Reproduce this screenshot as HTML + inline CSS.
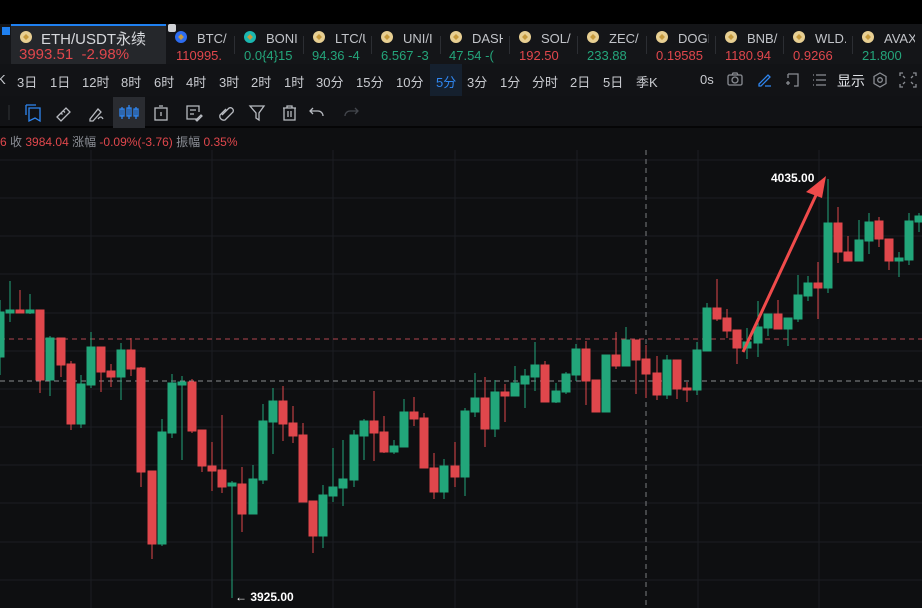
<!DOCTYPE html>
<html><head><meta charset="utf-8"><style>
*{margin:0;padding:0;box-sizing:border-box}
body{width:922px;height:608px;overflow:hidden;background:#0e0f11;font-family:"Liberation Sans","Noto Sans CJK SC",sans-serif;position:relative;color:#c9cbd0}
.a{position:absolute;white-space:nowrap}
#top{position:absolute;left:0;top:0;width:922px;height:24px;background:#000}
#tick{position:absolute;left:0;top:24px;width:922px;height:40px;background:#141518}
#tab{position:absolute;left:11px;top:24px;width:155px;height:40px;background:#25272b;border-top:2px solid #1f80f0}
.coin{position:absolute;width:12px;height:12px;border-radius:50%;background:#e8cf92}
.coin:after{content:"";position:absolute;left:3px;top:3px;width:6px;height:6px;background:#c69a3d;transform:rotate(45deg) scale(.7)}
.nm{font-size:13px;color:#c2c4c9;top:31px;width:31px;overflow:hidden}
.pr{font-size:13px;top:48px;width:58px;overflow:hidden}
.g{color:#24a57b}.r{color:#e0474c}
.sep{position:absolute;top:36px;width:1px;height:18px;background:#2c2e33}
#tf{position:absolute;left:0;top:64px;width:922px;height:32px;background:#121316}
.tf{font-size:13px;color:#c9cbd0;top:72px}
#tb{position:absolute;left:0;top:96px;width:922px;height:32px;background:#111215;border-bottom:2px solid #050506}
#info{font-size:12px;top:133px;color:#8b8e95}
</style></head><body>
<div id="top"></div>
<div id="tick"></div>
<div id="tab"></div>
<div class="a" style="left:2px;top:27px;width:8px;height:8px;background:#1f80f0"></div>
<div class="a" style="left:168px;top:24px;width:8px;height:8px;background:#cfd1d5;border-radius:2px"></div>
<div class="coin" style="left:20px;top:31px"></div>
<div class="a" style="left:41px;top:28px;font-size:15px;color:#d6d8dc">ETH/USDT永续</div>
<div class="a r" style="left:19px;top:46px;font-size:15px">3993.51 &nbsp;-2.98%</div>
<div class="coin" style="left:175px;top:31px;background:#2d6cf0"></div>
<div class="a nm" style="left:197px">BTC/</div><div class="a pr r" style="left:176px;width:50px">110995.</div>
<div class="sep" style="left:234px"></div>
<div class="coin" style="left:244px;top:31px;background:#1bb7b0"></div>
<div class="a nm" style="left:266px">BONI</div><div class="a pr g" style="left:244px;width:52px">0.0{4}15</div>
<div class="sep" style="left:303px"></div>
<div class="coin" style="left:313px;top:31px"></div>
<div class="a nm" style="left:335px">LTC/U</div><div class="a pr g" style="left:312px;width:52px">94.36 -4</div>
<div class="sep" style="left:371px"></div>
<div class="coin" style="left:381px;top:31px"></div>
<div class="a nm" style="left:403px">UNI/I</div><div class="a pr g" style="left:381px;width:52px">6.567 -3</div>
<div class="sep" style="left:440px"></div>
<div class="coin" style="left:450px;top:31px"></div>
<div class="a nm" style="left:472px">DASH</div><div class="a pr g" style="left:449px;width:52px">47.54 -(</div>
<div class="sep" style="left:509px"></div>
<div class="coin" style="left:519px;top:31px"></div>
<div class="a nm" style="left:541px">SOL/</div><div class="a pr r" style="left:519px">192.50</div>
<div class="sep" style="left:577px"></div>
<div class="coin" style="left:587px;top:31px"></div>
<div class="a nm" style="left:609px">ZEC/</div><div class="a pr g" style="left:587px">233.88</div>
<div class="sep" style="left:646px"></div>
<div class="coin" style="left:656px;top:31px"></div>
<div class="a nm" style="left:678px">DOGI</div><div class="a pr r" style="left:656px">0.19585</div>
<div class="sep" style="left:715px"></div>
<div class="coin" style="left:725px;top:31px"></div>
<div class="a nm" style="left:747px">BNB/</div><div class="a pr r" style="left:725px">1180.94</div>
<div class="sep" style="left:783px"></div>
<div class="coin" style="left:793px;top:31px"></div>
<div class="a nm" style="left:815px">WLD.</div><div class="a pr r" style="left:793px">0.9266</div>
<div class="sep" style="left:852px"></div>
<div class="coin" style="left:862px;top:31px"></div>
<div class="a nm" style="left:884px">AVAX</div><div class="a pr g" style="left:862px">21.800</div>

<div id="tf"></div>
<div class="a" style="left:430px;top:64px;width:32px;height:32px;background:#15202e"></div>
<div class="a tf" style="left:-3px">K</div>
<div class="a tf" style="left:17px">3日</div><div class="a tf" style="left:50px">1日</div>
<div class="a tf" style="left:82px">12时</div><div class="a tf" style="left:121px">8时</div>
<div class="a tf" style="left:154px">6时</div><div class="a tf" style="left:186px">4时</div>
<div class="a tf" style="left:219px">3时</div><div class="a tf" style="left:251px">2时</div>
<div class="a tf" style="left:284px">1时</div><div class="a tf" style="left:316px">30分</div>
<div class="a tf" style="left:356px">15分</div><div class="a tf" style="left:396px">10分</div>
<div class="a tf" style="left:436px;color:#2f86f0">5分</div><div class="a tf" style="left:467px">3分</div>
<div class="a tf" style="left:500px">1分</div><div class="a tf" style="left:532px">分时</div>
<div class="a tf" style="left:570px">2日</div><div class="a tf" style="left:603px">5日</div>
<div class="a tf" style="left:636px">季K</div>
<div class="a tf" style="left:700px">0s</div>
<div class="a tf" style="left:837px;font-size:14px;color:#e0e2e6;top:71px">显示</div>
<svg class="a" style="left:0;top:64px" width="922" height="32" fill="none" stroke-width="1.3">
<g stroke="#8a8d93"><rect x="728" y="11" width="14" height="10" rx="1.5"/><circle cx="735" cy="16" r="3"/><path d="M732 11l1-2h4l1 2"/></g>
<g stroke="#2f86f0"><path d="M759 20l9-9 2 2-9 9h-2z M765 22h6"/></g>
<g stroke="#8a8d93"><path d="M788 10h10v12h-4 M788 10v4 M786 19h4 M788 17v4"/><path d="M816 11h10 M816 16h10 M816 21h10 M813 11h1 M813 16h1 M813 21h1"/>
<path d="M880 9l6 3.5v7l-6 3.5-6-3.5v-7z"/><circle cx="880" cy="16" r="2.3"/>
<path d="M903 9h-3v3 M913 9h3v3 M903 23h-3v-3 M913 23h3v-3 M903 12l2 2 M913 12l-2 2 M903 20l2-2 M913 20l-2-2"/></g>
</svg>

<div id="tb"></div>
<div class="a" style="left:113px;top:97px;width:32px;height:31px;background:#2a2c31"></div>
<svg class="a" style="left:0;top:96px" width="400" height="32" fill="none" stroke-width="1.3">
<path d="M9 9v15" stroke="#2b2d31"/>
<g stroke="#2f86f0"><path d="M26 9h10 M26 9v10 M29 12h11v13l-5-3-6 3z"/>
<path d="M122 11v12 M136 11v12 M129 9v14"/><rect x="120" y="13" width="4" height="7"/><rect x="127" y="12" width="4" height="8"/><rect x="134" y="13" width="4" height="7"/></g>
<g stroke="#b8bbc1"><path d="M57 21l9-9 4 4-9 9z M61 17l1.5 1.5 M63.5 15l1.5 1.5"/>
<path d="M90 23l8-10 3 3-8 9h-3z M98 23q3-4 5 0"/>
<rect x="155" y="12" width="12" height="12"/><path d="M159 10h4 M161 16v4"/>
<path d="M198 23h-11v-13h12v6 M190 14h6 M190 18h4 M196 24l5-5 1 1-5 5z"/>
<path d="M222 19l7-7a3 3 0 0 1 4 4l-8 8a4 4 0 0 1-5-5l6-6"/>
<path d="M250 10h14l-5 7v7l-3-2v-5z"/>
<path d="M283 12h13 M287 12v-2h5v2 M284 12v12h11v-12 M288 15v6 M291 15v6"/>
<path d="M313 12l-3 3 3 3 M310 15h8a5 5 0 0 1 5 5"/></g>
<path d="M355 12l3 3-3 3 M358 15h-8a5 5 0 0 0-5 5" stroke="#44474d"/>
</svg>
<div class="a" id="info"><span class="r">6</span> 收 <span class="r">3984.04</span> 涨幅 <span class="r">-0.09%(-3.76)</span> 振幅 <span class="r">0.35%</span></div>

<svg class="a" style="left:0;top:150px" width="922" height="458">
<g transform="translate(0,-150)">
<g stroke="#1c1e22" stroke-width="1">
<path d="M0 160H922M0 198H922M0 236H922M0 274H922M0 313H922M0 351H922M0 389H922M0 427H922M0 465H922M0 503H922M0 542H922M0 580H922"/>
<path d="M91 150V608M212 150V608M333 150V608M455 150V608M577 150V608M698 150V608M819 150V608"/>
</g>
<path d="M0 339H922" stroke="#b0464f" stroke-dasharray="5 4" stroke-width="1"/>
<path d="M0 381H922" stroke="#8a8c90" stroke-dasharray="5 4" stroke-width="1"/>
<path d="M646 150V608" stroke="#7a7c80" stroke-dasharray="5 4" stroke-width="1"/>
<g fill="#22a67a" stroke="#22a67a">
<path d="M0 300V375M10 281V322M30 294V314M50 336V396M81 375V428M91 332V388M121 343V400M162 419V546M172 374V438M182 376V460M232 481V598M253 465V514M263 404V484M273 388V454M323 485V548M333 448V502M343 440V506M354 430V487M364 419V460M394 440V454M404 399V447M444 459V499M465 408V496M475 373V417M495 380V437M515 366V396M525 369V408M535 342V391M556 383V403M566 372V394M576 344V381M606 355V412M626 327V366M667 355V399M697 342V395M707 303V351M747 328V359M758 301V357M768 314V336M788 318V346M798 275V322M808 276V301M828 179V293M859 220V261M869 213V254M899 252V277M909 213V265M919 213V232"/>
<rect x="-4" y="312" width="8" height="45"/><rect x="6" y="310" width="8" height="3"/><rect x="26" y="310" width="8" height="3"/><rect x="46" y="338" width="8" height="42"/><rect x="77" y="384" width="8" height="40"/><rect x="87" y="347" width="8" height="38"/><rect x="117" y="350" width="8" height="27"/><rect x="158" y="432" width="8" height="112"/><rect x="168" y="383" width="8" height="50"/><rect x="178" y="382" width="8" height="3"/><rect x="228" y="483" width="8" height="3"/><rect x="249" y="479" width="8" height="35"/><rect x="259" y="421" width="8" height="59"/><rect x="269" y="401" width="8" height="21"/><rect x="319" y="495" width="8" height="41"/><rect x="329" y="487" width="8" height="9"/><rect x="339" y="479" width="8" height="9"/><rect x="350" y="435" width="8" height="45"/><rect x="360" y="421" width="8" height="15"/><rect x="390" y="446" width="8" height="6"/><rect x="400" y="412" width="8" height="35"/><rect x="440" y="466" width="8" height="26"/><rect x="461" y="411" width="8" height="66"/><rect x="471" y="398" width="8" height="14"/><rect x="491" y="392" width="8" height="37"/><rect x="511" y="383" width="8" height="13"/><rect x="521" y="376" width="8" height="8"/><rect x="531" y="365" width="8" height="12"/><rect x="552" y="391" width="8" height="11"/><rect x="562" y="374" width="8" height="18"/><rect x="572" y="349" width="8" height="26"/><rect x="602" y="355" width="8" height="57"/><rect x="622" y="340" width="8" height="26"/><rect x="663" y="360" width="8" height="35"/><rect x="693" y="350" width="8" height="40"/><rect x="703" y="308" width="8" height="43"/><rect x="743" y="342" width="8" height="6"/><rect x="754" y="327" width="8" height="16"/><rect x="764" y="314" width="8" height="14"/><rect x="784" y="318" width="8" height="11"/><rect x="794" y="295" width="8" height="24"/><rect x="804" y="283" width="8" height="13"/><rect x="824" y="223" width="8" height="65"/><rect x="855" y="240" width="8" height="21"/><rect x="865" y="222" width="8" height="19"/><rect x="895" y="258" width="8" height="3"/><rect x="905" y="221" width="8" height="39"/><rect x="915" y="216" width="8" height="6"/>
</g>
<g fill="#e0474c" stroke="#e0474c">
<path d="M20 290V313M40 310V393M61 338V377M71 361V430M101 347V392M111 364V387M131 338V376M141 367V487M152 471V559M192 379V433M202 430V472M212 442V491M222 415V493M242 467V532M283 386V441M293 406V443M303 423V502M313 501V553M374 391V461M384 416V453M414 397V426M424 413V468M434 453V499M455 442V487M485 377V447M505 384V422M545 361V402M586 341V405M596 380V412M616 332V369M636 340V394M646 345V398M657 356V400M677 360V399M687 382V402M717 279V321M727 309V338M737 330V364M778 300V329M818 262V319M838 207V263M848 236V261M879 217V247M889 239V270"/>
<rect x="16" y="310" width="8" height="3"/><rect x="36" y="310" width="8" height="70"/><rect x="57" y="338" width="8" height="27"/><rect x="67" y="364" width="8" height="60"/><rect x="97" y="347" width="8" height="25"/><rect x="107" y="371" width="8" height="6"/><rect x="127" y="350" width="8" height="19"/><rect x="137" y="368" width="8" height="104"/><rect x="148" y="471" width="8" height="73"/><rect x="188" y="382" width="8" height="49"/><rect x="198" y="430" width="8" height="36"/><rect x="208" y="466" width="8" height="5"/><rect x="218" y="470" width="8" height="17"/><rect x="238" y="484" width="8" height="30"/><rect x="279" y="401" width="8" height="23"/><rect x="289" y="423" width="8" height="13"/><rect x="299" y="435" width="8" height="67"/><rect x="309" y="501" width="8" height="35"/><rect x="370" y="421" width="8" height="12"/><rect x="380" y="432" width="8" height="20"/><rect x="410" y="412" width="8" height="7"/><rect x="420" y="418" width="8" height="50"/><rect x="430" y="468" width="8" height="24"/><rect x="451" y="466" width="8" height="11"/><rect x="481" y="398" width="8" height="31"/><rect x="501" y="392" width="8" height="4"/><rect x="541" y="365" width="8" height="37"/><rect x="582" y="349" width="8" height="32"/><rect x="592" y="380" width="8" height="32"/><rect x="612" y="355" width="8" height="11"/><rect x="632" y="340" width="8" height="20"/><rect x="642" y="359" width="8" height="15"/><rect x="653" y="373" width="8" height="22"/><rect x="673" y="360" width="8" height="29"/><rect x="683" y="388" width="8" height="2"/><rect x="713" y="308" width="8" height="11"/><rect x="723" y="318" width="8" height="13"/><rect x="733" y="330" width="8" height="18"/><rect x="774" y="314" width="8" height="15"/><rect x="814" y="283" width="8" height="5"/><rect x="834" y="223" width="8" height="29"/><rect x="844" y="252" width="8" height="9"/><rect x="875" y="221" width="8" height="18"/><rect x="885" y="239" width="8" height="22"/>
</g>
<path d="M743 352L817 193" stroke="#f04b4b" stroke-width="3"/>
<path d="M826 176L806 192L822 198Z" fill="#f04b4b"/>
<text x="771" y="182" font-size="12" font-weight="bold" fill="#fff" font-family="Liberation Sans, sans-serif">4035.00</text>
<text x="235" y="601" font-size="12" font-weight="bold" fill="#fff" font-family="Liberation Sans, sans-serif">← 3925.00</text>
</g>
</svg>
</body></html>
